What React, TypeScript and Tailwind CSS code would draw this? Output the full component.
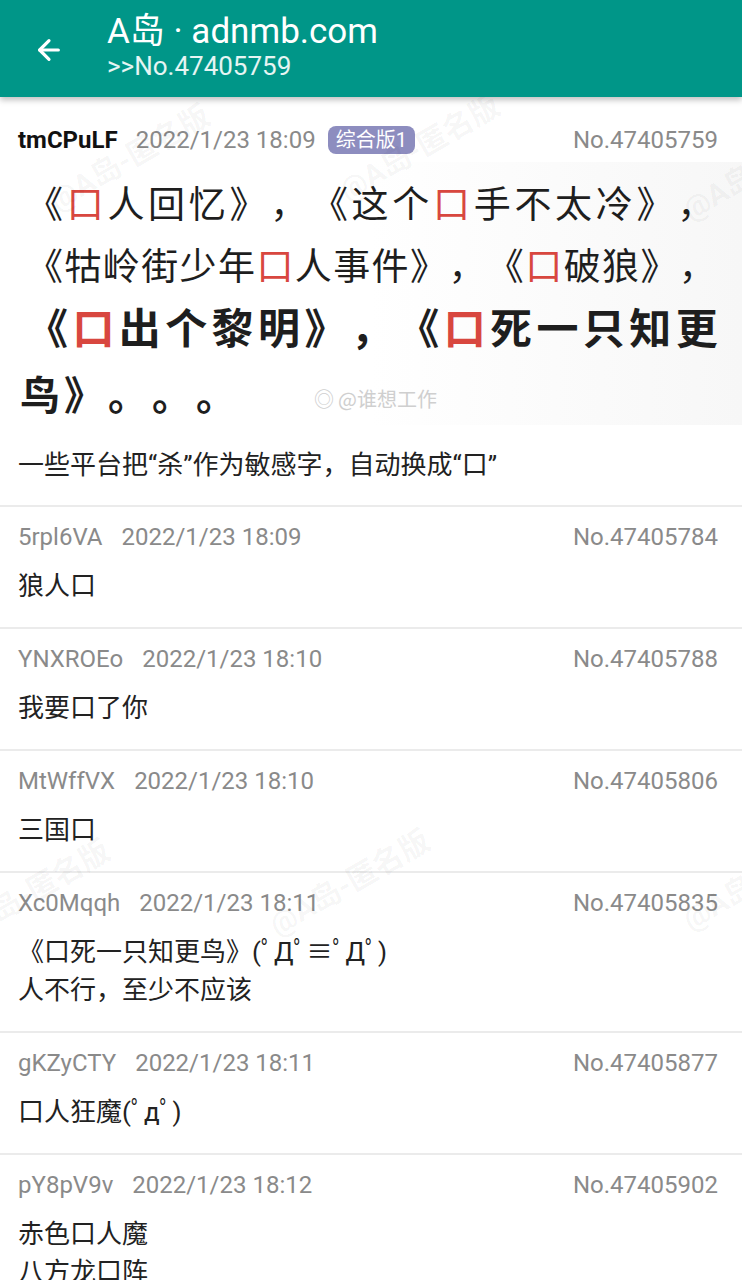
import React from "react";
import { ArrowLeft } from "lucide-react";

const F = "font-['Roboto','Noto_Sans_CJK_SC',sans-serif]";

function R({ children }: { children: React.ReactNode }) {
  return <span className="text-[#d8473f]">{children}</span>;
}

type Post = { id: string; time: string; no: string; lines: string[] };

const replies: Post[] = [
  { id: "5rpl6VA", time: "2022/1/23 18:09", no: "No.47405784", lines: ["狼人口"] },
  { id: "YNXROEo", time: "2022/1/23 18:10", no: "No.47405788", lines: ["我要口了你"] },
  { id: "MtWffVX", time: "2022/1/23 18:10", no: "No.47405806", lines: ["三国口"] },
  { id: "Xc0Mqqh", time: "2022/1/23 18:11", no: "No.47405835", lines: ["《口死一只知更鸟》(ﾟДﾟ≡ﾟДﾟ)", "人不行，至少不应该"] },
  { id: "gKZyCTY", time: "2022/1/23 18:11", no: "No.47405877", lines: ["口人狂魔(ﾟдﾟ)"] },
  { id: "pY8pV9v", time: "2022/1/23 18:12", no: "No.47405902", lines: ["赤色口人魔", "八方龙口阵"] },
];

function Watermark({ className, text = "@A岛-匿名版" }: { className: string; text?: string }) {
  return (
    <div
      className={`pointer-events-none absolute z-10 rotate-[-30deg] whitespace-nowrap text-[30px] font-bold text-black/[0.045] ${className}`}
    >
      {text}
    </div>
  );
}

export default function App() {
  return (
    <div className={`${F} relative h-[1280px] w-[742px] overflow-hidden bg-white [text-spacing-trim:space-all]`}>
      <header className="relative z-20 flex h-[97px] items-center bg-[#009688] shadow-[0_3px_6px_rgba(0,0,0,0.25)]">
        <div className="flex w-[107px] justify-center pr-[10px] pt-[2px]">
          <ArrowLeft size={32} strokeWidth={2.4} className="text-white" />
        </div>
        <div className="-mt-[4px] flex flex-col text-white">
          <div className="text-[35px] leading-[38px]">A岛 · adnmb.com</div>
          <div className="text-[26px] leading-[30px] text-white/90">&gt;&gt;No.47405759</div>
        </div>
      </header>

      <Watermark className="left-[40px] top-[135px]" />
      <Watermark className="left-[330px] top-[125px]" />
      <Watermark className="left-[680px] top-[170px]" text="@A岛" />
      <Watermark className="left-[-60px] top-[870px]" />
      <Watermark className="left-[260px] top-[860px]" />
      <Watermark className="left-[680px] top-[880px]" text="@A岛" />

      {/* main post */}
      <section className="border-b-2 border-[#ebebeb] pb-[21px] pl-[18px] pr-[24px] pt-[29px]">
        <div className="flex items-center text-[24px] leading-[26px]">
          <span className="font-bold text-[#111]">tmCPuLF</span>
          <span className="ml-[18px] text-[#8a8a8a]">2022/1/23 18:09</span>
          <span className="ml-[12px] rounded-[8px] bg-[#8d8dbf] px-[8px] text-[20px] leading-[28px] text-white">
            综合版1
          </span>
          <span className="ml-auto text-[#8a8a8a]">No.47405759</span>
        </div>

        <div className="relative -ml-[18px] -mr-[24px] mt-[8px] flex flex-col bg-gradient-to-r from-white via-white to-[#f7f7f7] pb-[1px] pl-[26px] pt-[9px] font-['Noto_Sans_CJK_SC',sans-serif] text-[#1e1e1e]">
          <div className="whitespace-nowrap text-[37px] leading-[62px] tracking-[3.7px]">
            《<R>口</R>人回忆》，《这个<R>口</R>手不太冷》，
          </div>
          <div className="whitespace-nowrap text-[37px] leading-[62px] tracking-[1.4px]">
            《牯岭街少年<R>口</R>人事件》，《<R>口</R>破狼》，
          </div>
          <div className="whitespace-nowrap text-[42px] font-bold leading-[62px] tracking-[4.4px]">
            《<R>口</R>出个黎明》，《<R>口</R>死一只知更
          </div>
          <div className="mt-[5px] flex items-end whitespace-nowrap">
            <span className="-ml-[6px] text-[40px] font-bold leading-[62px] tracking-[4px]">鸟》。。。</span>
            <span className="mb-[10px] ml-[74px] flex items-center text-[20px] text-[#cfcfcf]">
              <span className="mr-[4px] text-[20px]">◎</span>@谁想工作
            </span>
          </div>
        </div>

        <div className="mt-[21px] text-[26px] leading-[38px] text-[#222]">
          一些平台把“杀”作为敏感字，自动换成“口”
        </div>
      </section>

      {replies.map((p) => (
        <section key={p.no} className="border-b-2 border-[#ebebeb] pb-[22px] pl-[18px] pr-[24px] pt-[17px]">
          <div className="flex items-center text-[24px] leading-[26px] text-[#8a8a8a]">
            <span>{p.id}</span>
            <span className="ml-[19px]">{p.time}</span>
            <span className="ml-auto">{p.no}</span>
          </div>
          <div className="mt-[17px] flex flex-col text-[26px] leading-[38px] text-[#222]">
            {p.lines.map((l) => (
              <div key={l}>{l}</div>
            ))}
          </div>
        </section>
      ))}
    </div>
  );
}
